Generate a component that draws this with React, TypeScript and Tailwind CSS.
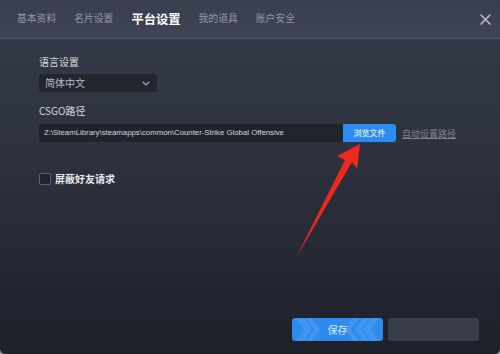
import React from "react";

const font = { fontFamily: '"Noto Sans CJK SC", "Liberation Sans", sans-serif' };

export default function App() {
  const tabs = ["基本资料", "名片设置", "平台设置", "我的道具", "账户安全"];
  return (
    <div className="w-[500px] h-[354px] overflow-hidden bg-[#9a9ca3]" style={font}>
      <div className="relative w-[500px] h-[354px] rounded-b-[5px] overflow-hidden flex flex-col bg-gradient-to-b from-[#373c4b] via-[#2b303c] to-[#1d2029]">
        {/* header */}
        <div className="h-[39px] shrink-0 flex items-center pl-[17px] pr-[9px] bg-gradient-to-b from-[#383e4d] to-[#3f4556] border-b border-[#515769]">
          <div className="flex items-center gap-[18px]">
            {tabs.map((t, i) =>
              i === 2 ? (
                <span key={t} className="text-[12.3px] font-bold text-white leading-none">{t}</span>
              ) : (
                <span key={t} className="text-[9.8px] text-[#9297a3] leading-none">{t}</span>
              )
            )}
          </div>
          <div className="ml-auto">
            <svg width="11" height="11" viewBox="0 0 11 11">
              <path d="M1 1 L10 10 M10 1 L1 10" stroke="#b9bdc6" strokeWidth="1.6" strokeLinecap="round" />
            </svg>
          </div>
        </div>

        {/* content */}
        <div className="flex-1 flex flex-col pl-[39px]">
          <div className="mt-[16px] text-[10px] leading-[14px] text-[#d5d8de]">语言设置</div>
          <div className="mt-[5px] w-[118px] h-[18px] rounded-[3px] bg-[#22262f] flex items-center pl-[6px] pr-[7px]">
            <span className="text-[10px] text-[#b8bcc5] leading-none">简体中文</span>
            <svg className="ml-auto" width="8" height="5" viewBox="0 0 8 5">
              <path d="M0.8 0.8 L4 4 L7.2 0.8" stroke="#aeb2bb" strokeWidth="1.2" fill="none" />
            </svg>
          </div>

          <div className="mt-[12px] text-[10px] leading-[14px] text-[#d5d8de]">CSGO路径</div>
          <div className="mt-[6px] flex items-center">
            <div className="w-[304px] h-[18px] bg-[#1f232b] rounded-l-[2px] flex items-center pl-[5px]">
              <span className="text-[7.8px] text-[#d2d5db] leading-none" style={{ fontFamily: '"Liberation Sans", sans-serif' }}>
                Z:\SteamLibrary\steamapps\common\Counter-Strike Global Offensive
              </span>
            </div>
            <div className="w-[53px] h-[18px] bg-[#2d8cf0] rounded-r-[3px] flex items-center justify-center">
              <span className="text-[8px] text-white leading-none">浏览文件</span>
            </div>
            <span className="ml-[6px] text-[9px] text-[#7d828d] underline leading-none">自动设置路径</span>
          </div>

          <div className="mt-[31px] flex items-center">
            <div className="w-[12px] h-[12px] rounded-[2px] border border-[#5c6170] bg-[#1f232b]" />
            <span className="ml-[4px] text-[10px] font-bold text-[#e6e8ec] leading-none">屏蔽好友请求</span>
          </div>

          <div className="mt-auto mb-[13px] ml-[253px] flex gap-[5px]">
            <div className="relative w-[91px] h-[23px] rounded-[3px] bg-[#2d8bef] overflow-hidden flex items-center justify-center">
              <svg className="absolute inset-0" width="91" height="23" viewBox="0 0 91 23">
                <g fill="#ffffff" fillOpacity="0.1">
                  <polygon points="4,0 12,0 20,11.5 12,23 4,23 12,11.5" />
                  <polygon points="14,0 20,0 28,11.5 20,23 14,23 22,11.5" />
                  <polygon points="87,0 79,0 71,11.5 79,23 87,23 79,11.5" />
                  <polygon points="77,0 71,0 63,11.5 71,23 77,23 69,11.5" />
                  <polygon points="67,0 61,0 53,11.5 61,23 67,23 59,11.5" />
                </g>
              </svg>
              <span className="relative text-[10px] text-[#dbe9fb] leading-none">保存</span>
            </div>
            <div className="w-[91px] h-[23px] rounded-[3px] bg-[#393c4a]" />
          </div>
        </div>

        {/* red arrow annotation */}
        <svg className="absolute left-0 top-0 pointer-events-none" width="500" height="354" viewBox="0 0 500 354">
          <polygon points="360,144 337,156 345,160 296,258 352,162 357,169" fill="#f0271f" />
        </svg>
      </div>
    </div>
  );
}
